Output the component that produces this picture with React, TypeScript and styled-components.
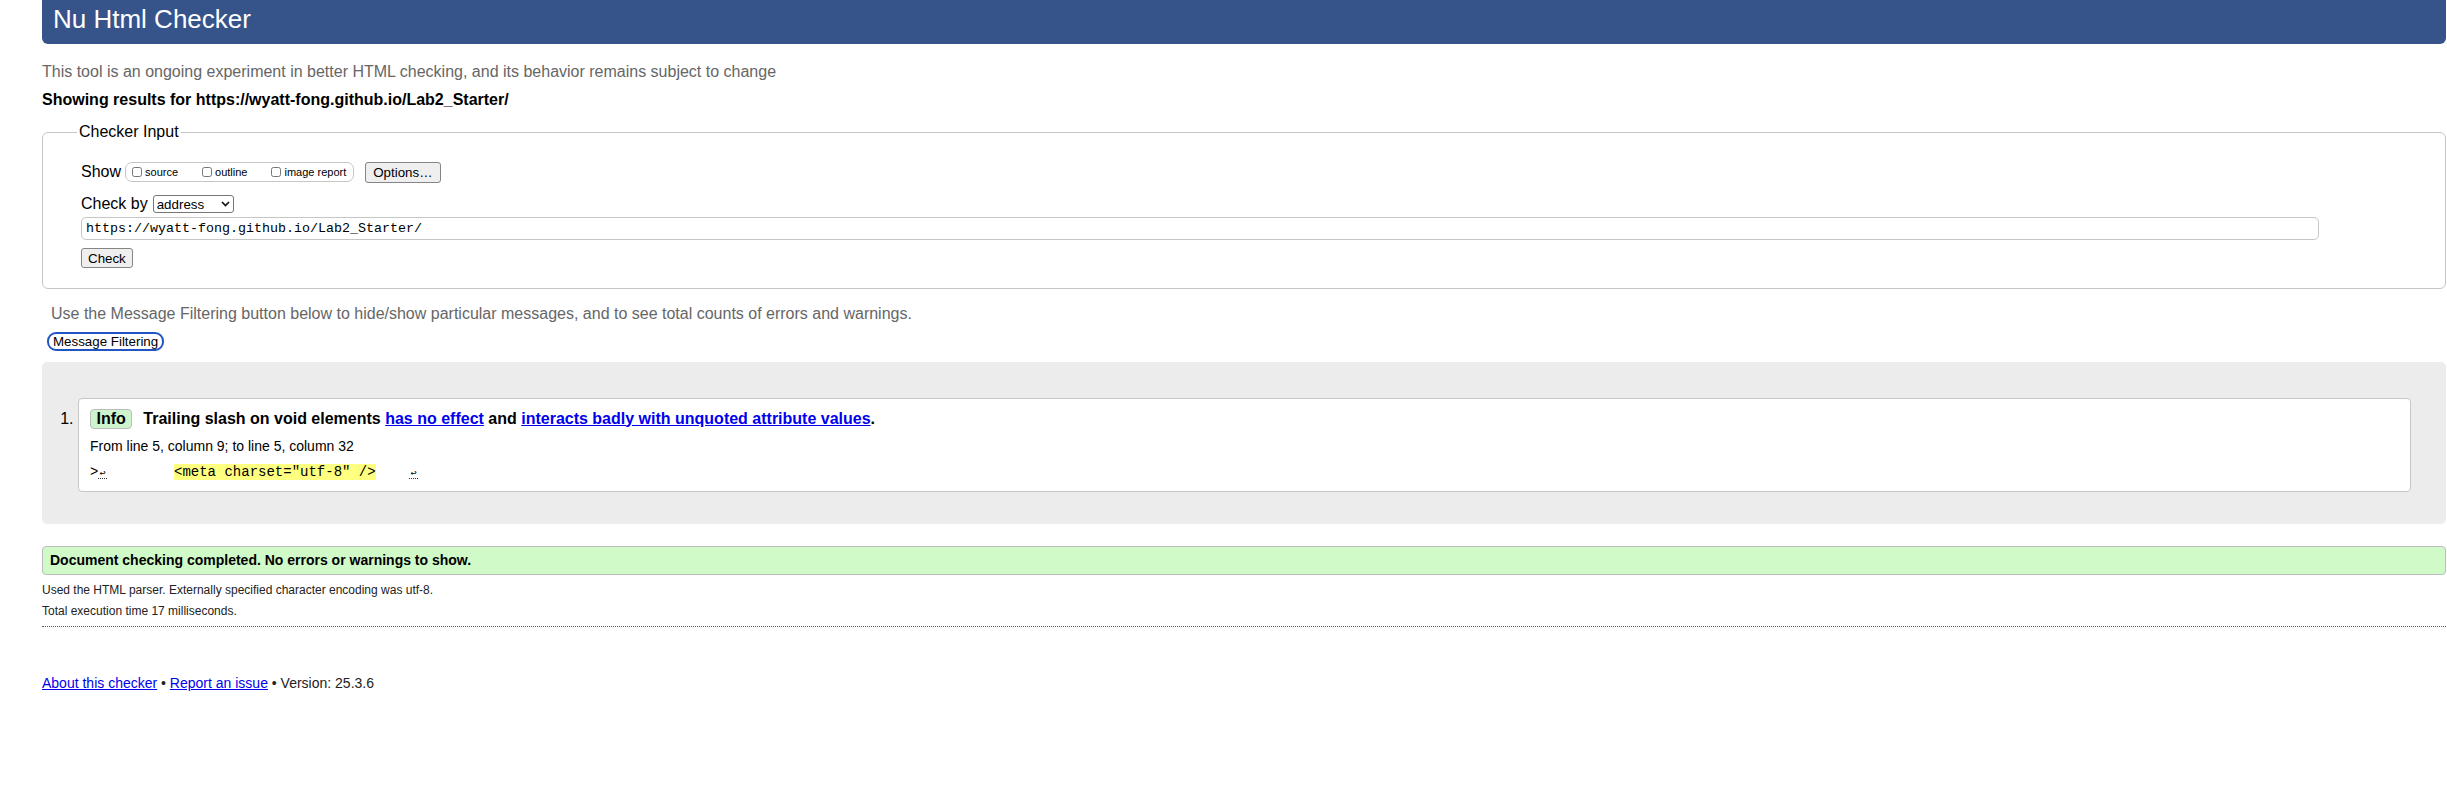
import React from 'react';
import styled, { createGlobalStyle } from 'styled-components';

const GlobalStyle = createGlobalStyle`
  html, body {
    margin: 0;
    padding: 0;
    background: #fff;
  }
  body {
    font-family: "Liberation Sans", Arial, Helvetica, sans-serif;
    color: #000;
  }
`;

const Page = styled.div`
  padding: 0 1px 0 42px;
`;

const Title = styled.h1`
  margin: 0;
  height: 44px;
  box-sizing: border-box;
  padding: 0 0 6px 11px;
  background: #36538a;
  color: #fff;
  font-size: 26px;
  font-weight: normal;
  line-height: 38px;
  border-radius: 0 0 6px 6px;
`;

const Note = styled.p<{ $top: number; $indent?: number }>`
  margin: ${(p) => p.$top}px 0 0 ${(p) => p.$indent ?? 0}px;
  font-size: 16px;
  line-height: 20px;
  color: #666;
`;

const Showing = styled.p`
  margin: 8px 0 0;
  font-size: 16px;
  line-height: 20px;
  font-weight: bold;
`;

// checker input form
const Form = styled.fieldset`
  margin: 12px 0 0;
  padding: 19px 126px 20px 38px;
  border: 1px solid #c6c6c6;
  border-radius: 6px;
  min-width: 0;
`;

const Legend = styled.legend`
  margin-left: -4px;
  padding: 0 2px;
  font-size: 16px;
  line-height: 20px;
`;

const Row = styled.div<{ $h: number; $top?: number }>`
  display: flex;
  align-items: center;
  height: ${(p) => p.$h}px;
  margin-top: ${(p) => p.$top ?? 0}px;
`;

const RowLabel = styled.span<{ $gap: number }>`
  font-size: 16px;
  line-height: 20px;
  margin-right: ${(p) => p.$gap}px;
`;

const ShowGroup = styled.span`
  display: inline-flex;
  align-items: center;
  height: 20px;
  box-sizing: border-box;
  padding: 0 7px 0 6px;
  border: 1px solid #c6c6c6;
  border-radius: 7px;
  margin-right: 11px;
`;

const ShowItem = styled.label<{ $last?: boolean }>`
  display: inline-flex;
  align-items: center;
  font-size: 11px;
  margin-right: ${(p) => (p.$last ? 0 : 24)}px;
`;

const Box = styled.input`
  width: 10px;
  height: 10px;
  margin: 0 3px 0 0;
`;

const Btn = styled.button<{ $h: number; $pad: number }>`
  height: ${(p) => p.$h}px;
  padding: 0 ${(p) => p.$pad}px;
  box-sizing: border-box;
  font-family: "Liberation Sans", Arial, sans-serif;
  font-size: 13.33px;
  color: #000;
  background: #efefef;
  border: 1px solid #858585;
  border-radius: 3px;
`;

const CheckBtn = styled(Btn)`
  display: block;
  margin-top: 8px;
`;

const SelectWrap = styled.span`
  position: relative;
  display: inline-block;
`;

const Select = styled.select`
  appearance: none;
  width: 81px;
  height: 18px;
  box-sizing: border-box;
  padding: 0 0 0 3px;
  font-family: "Liberation Sans", Arial, sans-serif;
  font-size: 13.33px;
  color: #000;
  background: #fff;
  border: 1px solid #767676;
  border-radius: 3px;
`;

const Chevron = styled.svg`
  position: absolute;
  right: 4px;
  top: 6px;
  pointer-events: none;
`;

const UrlField = styled.input`
  display: block;
  width: 100%;
  height: 23px;
  margin-top: 3px;
  box-sizing: border-box;
  padding: 0 4px;
  font-family: "Liberation Mono", "DejaVu Sans Mono", monospace;
  font-size: 13.33px;
  color: #000;
  border: 1px solid #c6c6c6;
  border-radius: 5px;
`;

const FilterBtn = styled.button`
  display: block;
  height: 19px;
  margin: 8px 0 0 5px;
  padding: 0 4px;
  box-sizing: border-box;
  font-family: "Liberation Sans", Arial, sans-serif;
  font-size: 13.33px;
  line-height: 15px;
  color: #000;
  background: #fff;
  border: 2px solid #2255c4;
  border-radius: 9px;
`;

// results
const Results = styled.div`
  margin-top: 11px;
  padding: 36px 35px 32px 36px;
  background: #ececec;
  border-radius: 5px;
`;

const List = styled.ol`
  margin: 0;
  padding: 0;
  list-style: decimal outside;
`;

const Message = styled.li`
  font-size: 16px;
  padding: 9.5px 12px 10.5px 11px;
  background: #fff;
  border: 1px solid #c6c6c6;
  border-radius: 4px;
`;

const MsgLine = styled.p`
  margin: 0;
  font-size: 16px;
  line-height: 20px;
  font-weight: bold;
`;

const Badge = styled.strong`
  display: inline-block;
  padding: 0 5.5px;
  margin-right: 11px;
  line-height: 18px;
  background: #cdf4cd;
  border: 1px solid #bcbcbc;
  border-radius: 4px;
`;

const Link = styled.a`
  color: #0000ee;
  text-decoration: underline;
`;

const Location = styled.p`
  margin: 8px 0 0;
  font-size: 14px;
  line-height: 18px;
`;

const Extract = styled.p`
  margin: 8px 0 0;
  font-family: "Liberation Mono", "DejaVu Sans Mono", monospace;
  font-size: 14px;
  line-height: 18px;
  white-space: pre;
`;

const Mark = styled.b`
  font-weight: normal;
  background: #ffff80;
`;

const LineBreak = styled.span`
  display: inline-block;
  width: 8.4px;
  font-family: "DejaVu Sans Mono", monospace;
  font-size: 10px;
  line-height: 10px;
  text-align: center;
  border-bottom: 1px dotted #333;
`;

const Success = styled.p`
  margin: 22px 0 0;
  height: 29px;
  box-sizing: border-box;
  padding: 0 7px;
  font-size: 14px;
  line-height: 27px;
  font-weight: bold;
  background: #d0fac8;
  border: 1px solid #bcbcbc;
  border-radius: 4px;
`;

const Stats = styled.div`
  margin-top: 7px;
  padding-bottom: 7px;
  border-bottom: 1px dotted #555;
`;

const StatLine = styled.p<{ $top: number }>`
  margin: ${(p) => p.$top}px 0 0;
  font-size: 12px;
  line-height: 16px;
  color: #222;
`;

const Footer = styled.p`
  margin: 47px 0 0;
  font-size: 14px;
  line-height: 18px;
  color: #222;
`;

export default function App() {
  return (
    <>
      <GlobalStyle />
      <Page>
        <Title>Nu Html Checker</Title>
        <Note $top={18}>
          This tool is an ongoing experiment in better HTML checking, and its behavior remains subject to change
        </Note>
        <Showing>Showing results for https://wyatt-fong.github.io/Lab2_Starter/</Showing>

        <Form>
          <Legend>Checker Input</Legend>
          <Row $h={22}>
            <RowLabel $gap={4}>Show</RowLabel>
            <ShowGroup>
              <ShowItem>
                <Box type="checkbox" />
                source
              </ShowItem>
              <ShowItem>
                <Box type="checkbox" />
                outline
              </ShowItem>
              <ShowItem $last>
                <Box type="checkbox" />
                image report
              </ShowItem>
            </ShowGroup>
            <Btn $h={21} $pad={7}>Options…</Btn>
          </Row>
          <Row $h={20} $top={11}>
            <RowLabel $gap={5}>Check by</RowLabel>
            <SelectWrap>
              <Select defaultValue="address">
                <option value="address">address</option>
                <option value="upload">file upload</option>
                <option value="text">text input</option>
              </Select>
              <Chevron width="9" height="6" viewBox="0 0 9 6">
                <polyline points="1,1 4.5,4.5 8,1" fill="none" stroke="#111" strokeWidth="1.7" />
              </Chevron>
            </SelectWrap>
          </Row>
          <UrlField type="url" defaultValue="https://wyatt-fong.github.io/Lab2_Starter/" />
          <CheckBtn $h={20} $pad={6}>Check</CheckBtn>
        </Form>

        <Note $top={15} $indent={9}>
          Use the Message Filtering button below to hide/show particular messages, and to see total counts of errors and warnings.
        </Note>
        <FilterBtn>Message Filtering</FilterBtn>

        <Results>
          <List>
            <Message>
              <MsgLine>
                <Badge>Info</Badge>
                Trailing slash on void elements <Link href="#">has no effect</Link> and{' '}
                <Link href="#">interacts badly with unquoted attribute values</Link>.
              </MsgLine>
              <Location>From line 5, column 9; to line 5, column 32</Location>
              <Extract>
                {'>'}
                <LineBreak>↩</LineBreak>
                {'        '}
                <Mark>{'<meta charset="utf-8" />'}</Mark>
                {'    '}
                <LineBreak>↩</LineBreak>
              </Extract>
            </Message>
          </List>
        </Results>

        <Success>Document checking completed. No errors or warnings to show.</Success>
        <Stats>
          <StatLine $top={0}>Used the HTML parser. Externally specified character encoding was utf-8.</StatLine>
          <StatLine $top={5}>Total execution time 17 milliseconds.</StatLine>
        </Stats>

        <Footer>
          <Link href="#">About this checker</Link> • <Link href="#">Report an issue</Link> • Version: 25.3.6
        </Footer>
      </Page>
    </>
  );
}
